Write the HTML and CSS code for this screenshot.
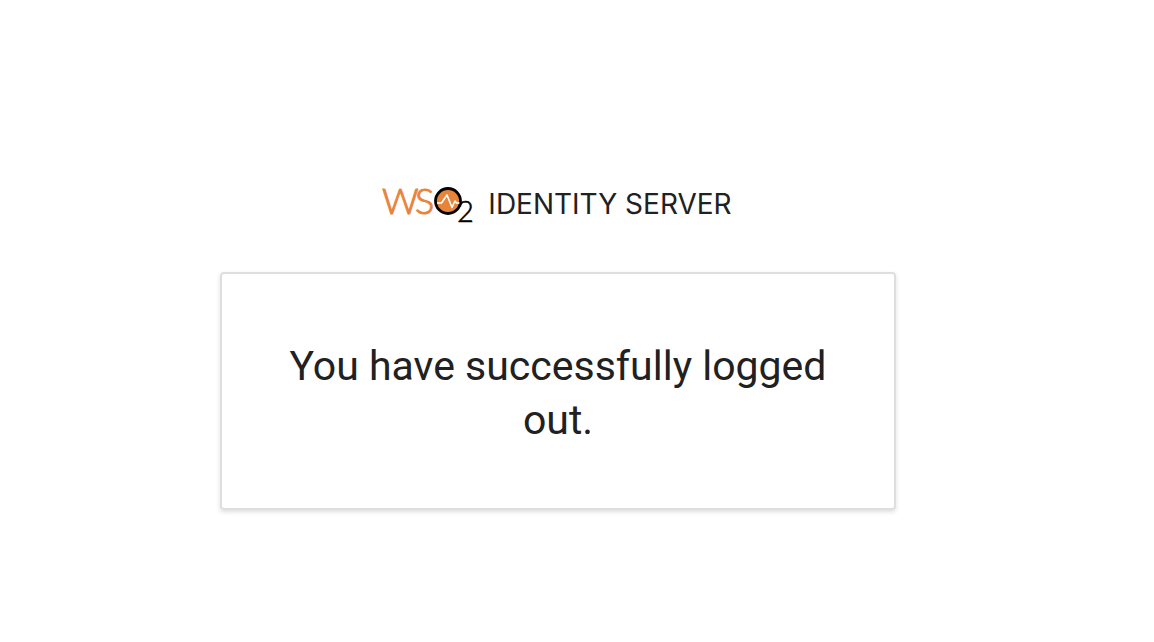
FILE: index.html
```html
<!DOCTYPE html>
<html lang="en">
<head>
<meta charset="utf-8">
<meta name="viewport" content="width=device-width, initial-scale=1">
<title>WSO2 Identity Server</title>
<link rel="stylesheet" href="styles.css">
</head>
<body class="page">
<main class="portal">
  <header class="brand">
    <svg class="brand-logo" viewBox="0 0 92 40" width="92" height="40" role="img" aria-label="WSO2">
      <text class="logo-ws" x="0 33" y="29">WS</text>
      <circle cx="66" cy="16" r="12.500" fill="#e8833a" stroke="#000" stroke-width="2.800"/>
      <path d="M55 18h4.500l5.500-8 5 12.500 3-6.500 1.500 2h3" fill="none" stroke="#fff" stroke-width="1.600" stroke-linejoin="round"/>
      <text class="logo-two" x="75" y="37">2</text>
    </svg>
    <span class="brand-name">IDENTITY SERVER</span>
  </header>
  <section class="card">
    <h1 class="message">You have successfully logged out.</h1>
  </section>
</main>
</body>
</html>
```
FILE: styles.css
```css
.page {
  margin: 0;
  background: #fff;
  color: #212121;
  font-family: Inter, "Liberation Sans", sans-serif;
}
.portal {
  max-width: 676px;
  margin: 0 auto;
  padding: 185px 38px 40px 0;
}
.brand {
  display: flex;
  justify-content: center;
  gap: 14px;
  margin-bottom: 47px;
  padding-right: 2px;
}
.brand-logo {
  flex: none;
  overflow: visible;
}
.logo-ws,
.logo-two {
  font-family: Lato, sans-serif;
  font-weight: 300;
}
.logo-ws {
  font-size: 36px;
  fill: #e8833a;
  stroke: #e8833a;
  stroke-width: 1px;
}
.logo-two {
  font-size: 29px;
  fill: #000;
  stroke: #000;
  stroke-width: 0.6px;
}
.brand-name {
  font-size: 28px;
  line-height: 38px;
}
.card {
  padding: 65px 62px 61px;
  border: 2px solid #dededf;
  border-radius: 4px;
  box-shadow: 0 2px 4px rgba(34, 36, 38, 0.15);
}
.message {
  margin: 0;
  font-family: Roboto, "Liberation Sans", sans-serif;
  font-size: 41px;
  font-weight: 400;
  line-height: 54px;
  text-align: center;
}
```
